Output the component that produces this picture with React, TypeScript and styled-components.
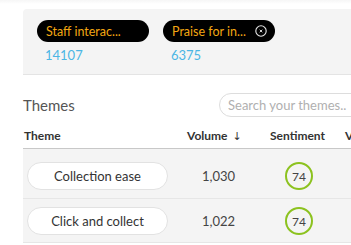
import React from 'react';
import styled, { createGlobalStyle } from 'styled-components';

const GlobalStyle = createGlobalStyle`
  html, body {
    margin: 0;
    padding: 0;
    background: #fff;
    overflow: hidden;
  }
  body {
    font-family: Lato, "Open Sans", sans-serif;
    color: #444;
  }
`;

type Filter = { label: string; count: number; closable?: boolean };
type Theme = { name: string; volume: string; sentiment: number };

const filters: Filter[] = [
  { label: 'Staff interac...', count: 14107 },
  { label: 'Praise for in...', count: 6375, closable: true },
];

const themes: Theme[] = [
  { name: 'Collection ease', volume: '1,030', sentiment: 74 },
  { name: 'Click and collect', volume: '1,022', sentiment: 74 },
];

export default function App() {
  return (
    <>
      <GlobalStyle />
      <TopShade />
      <Page>
        <FilterPanel>
          {filters.map(f => (
            <FilterItem key={f.label}>
              <Chip>
                <ChipLabel>{f.label}</ChipLabel>
                {f.closable && (
                  <CloseIcon viewBox="0 0 12 12">
                    <circle cx="6" cy="6" r="5.2" fill="none" stroke="#e6e6e6" strokeWidth="1.1" />
                    <path d="M4.7 4.7 L7.3 7.3 M7.3 4.7 L4.7 7.3" stroke="#e6e6e6" strokeWidth="0.9" />
                  </CloseIcon>
                )}
              </Chip>
              <Count>{f.count}</Count>
            </FilterItem>
          ))}
        </FilterPanel>

        <TitleBar>
          <Title>Themes</Title>
          <Search placeholder="Search your themes.." />
        </TitleBar>

        <Table>
          <HeaderRow>
            <HeadCell $pad={1}>Theme</HeadCell>
            <HeadCell $pad={4}>Volume <Arrow>↓</Arrow></HeadCell>
            <HeadCell $pad={7}>Sentiment</HeadCell>
            <HeadCell $pad={3}>Volume change</HeadCell>
          </HeaderRow>
          {themes.map((t, i) => (
            <Row key={t.name} $first={i === 0}>
              <Cell>
                <ThemePill>{t.name}</ThemePill>
              </Cell>
              <VolumeCell>{t.volume}</VolumeCell>
              <Cell>
                <Score>{t.sentiment}</Score>
              </Cell>
              <Cell />
            </Row>
          ))}
        </Table>
      </Page>
    </>
  );
}

const TopShade = styled.div`
  height: 4px;
  background: linear-gradient(#f6f6f6, #fff);
`;

const Page = styled.div`
  padding-left: 23px;
  margin-top: 5px;
`;

const FilterPanel = styled.div`
  display: flex;
  gap: 14px;
  height: 66px;
  box-sizing: border-box;
  padding: 11px 0 0 14px;
  background: #f4f4f4;
  border-radius: 4px 0 0 0;
  border-bottom: 1px solid #e4e4e4;
`;

const FilterItem = styled.div`
  display: flex;
  flex-direction: column;
`;

const Chip = styled.div`
  display: flex;
  align-items: center;
  justify-content: space-between;
  width: 112px;
  height: 22px;
  box-sizing: border-box;
  padding: 0 8px 0 9px;
  background: #000;
  border-radius: 11px;
`;

const ChipLabel = styled.span`
  color: #f3a712;
  font-size: 12.5px;
  white-space: nowrap;
`;

const CloseIcon = styled.svg`
  width: 12px;
  height: 12px;
`;

const Count = styled.span`
  margin-top: 5px;
  padding-left: 8px;
  color: #4bb6e4;
  font-size: 13px;
`;

const TitleBar = styled.div`
  display: flex;
  align-items: center;
  justify-content: space-between;
  height: 24px;
  margin-top: 18px;
`;

const Title = styled.h2`
  margin: 0;
  font-size: 15px;
  font-weight: 400;
  color: #555;
`;

const Search = styled.input`
  width: 154px;
  height: 24px;
  box-sizing: border-box;
  margin-right: -22px;
  padding: 0 8px;
  border: 1px solid #ddd;
  border-radius: 12px;
  font-family: inherit;
  font-size: 13px;
  outline: none;
  &::placeholder {
    color: #b0b0b0;
  }
`;

const Table = styled.div`
  display: flex;
  flex-direction: column;
`;

const columns = `
  display: grid;
  grid-template-columns: 160px 80px 79px 1fr;
`;

const HeaderRow = styled.div`
  ${columns}
  height: 32px;
  align-items: center;
  border-bottom: 1px solid #c8c8c8;
  padding-top: 5px;
  box-sizing: border-box;
`;

const HeadCell = styled.div<{ $pad: number }>`
  padding-left: ${p => p.$pad}px;
  font-size: 12px;
  font-weight: 700;
  color: #333;
  white-space: nowrap;
  overflow: hidden;
`;

const Arrow = styled.span`
  font-weight: 400;
  font-family: "DejaVu Sans", sans-serif;
  font-size: 11px;
  margin-left: 2px;
`;

const Row = styled.div<{ $first?: boolean }>`
  ${columns}
  align-items: center;
  background: #f4f4f4;
  padding: ${p => (p.$first ? '13px 0 8px' : '8px 0 7px')};
  border-bottom: 1px solid #e6e6e6;
`;

const Cell = styled.div`
  display: flex;
  align-items: center;
  padding-left: 4px;
`;

const VolumeCell = styled(Cell)`
  padding-left: 19px;
  font-size: 13px;
  color: #444;
`;

const ThemePill = styled.div`
  display: flex;
  align-items: center;
  justify-content: center;
  width: 141px;
  height: 28px;
  box-sizing: border-box;
  background: #fff;
  border: 1px solid #e2e2e2;
  border-radius: 14px;
  font-size: 13px;
  color: #333;
`;

const Score = styled.div`
  display: flex;
  align-items: center;
  justify-content: center;
  width: 28px;
  height: 28px;
  margin-left: 18px;
  box-sizing: border-box;
  border: 2px solid #8cc21f;
  border-radius: 50%;
  font-size: 12px;
  color: #444;
`;
